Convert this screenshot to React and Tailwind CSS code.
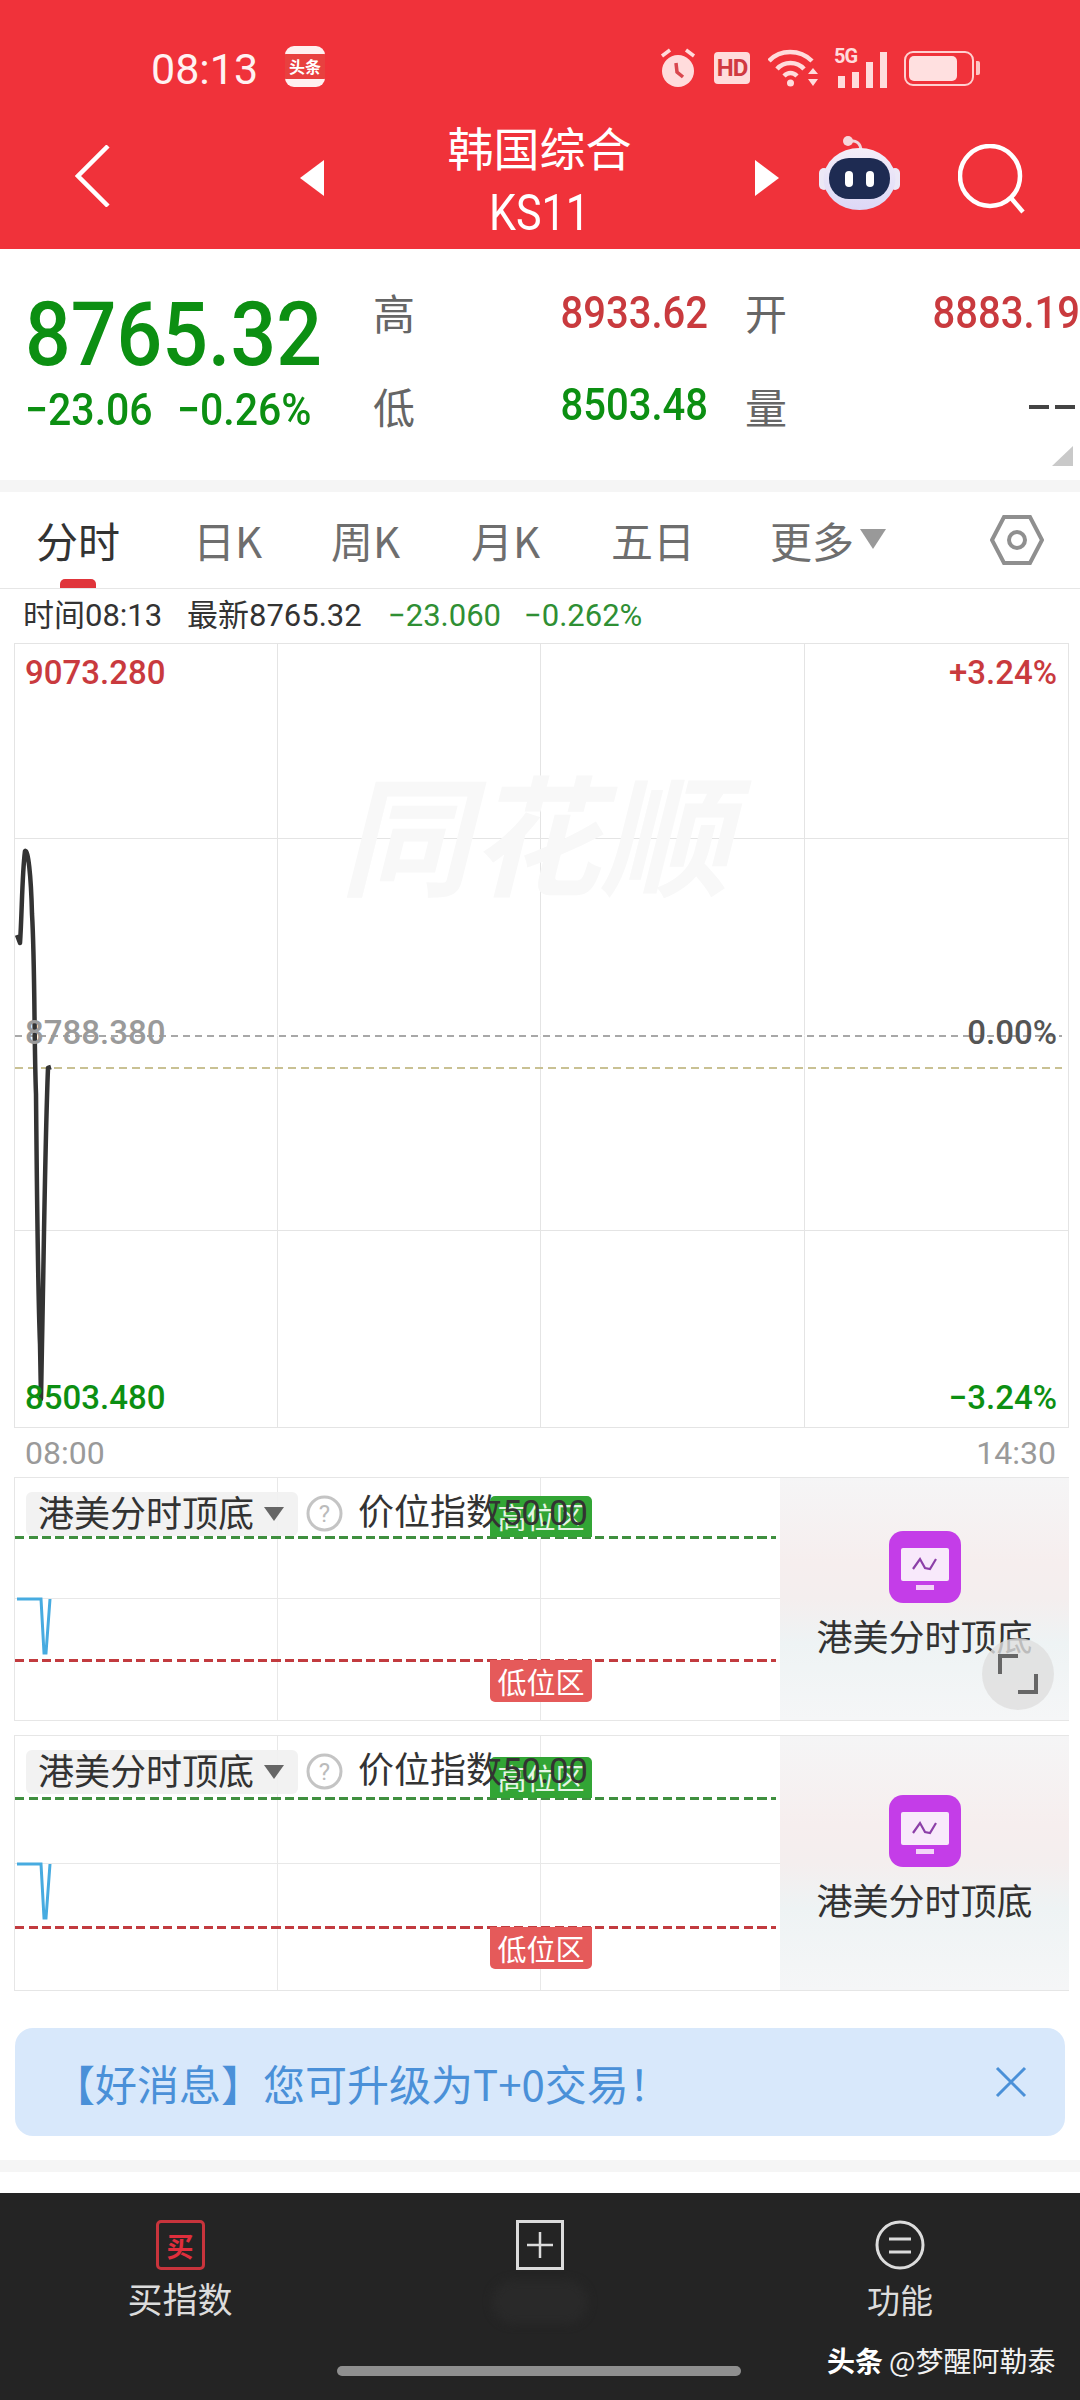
import React from "react";

const cjk = "font-['Noto_Sans_CJK_SC','Noto_Sans',sans-serif]";
const num = "font-['Roboto','Noto_Sans_CJK_SC',sans-serif]";

const tabs = [
  { label: "分时", width: "w-[157px]", active: true },
  { label: "日K", width: "w-[138px]" },
  { label: "周K", width: "w-[140px]" },
  { label: "月K", width: "w-[140px]" },
  { label: "五日", width: "w-[159px]" },
];

function StatusIcons() {
  return (
    <div className="flex items-center ml-[335px] h-[44px]">
      <svg width="36" height="40" viewBox="0 0 36 40" fill="#ffdcdc">
        <circle cx="18" cy="23" r="16" />
        <path d="M2 8 L10 2 M34 8 L26 2" stroke="#ffdcdc" strokeWidth="3.5" />
        <path d="M16 15 L17 24 L23 29" stroke="#d9474e" strokeWidth="3.5" fill="none" />
      </svg>
      <div className="ml-[18px] w-[36px] h-[32px] rounded-[4px] bg-[#ffdcdc] text-[#d03a42] text-[24px] leading-[32px] font-bold text-center font-['Roboto',sans-serif] tracking-[-1px]">
        HD
      </div>
      <svg className="ml-[18px]" width="52" height="40" viewBox="0 0 52 40" fill="none" stroke="#ffdcdc" strokeWidth="4.5">
        <path d="M1 13 C12 1 32 1 44 13" />
        <path d="M9 21 C16 13 29 13 36 21" />
        <path d="M16 28 C20 24 25 24 29 28" />
        <circle cx="22.5" cy="35" r="3.5" fill="#ffdcdc" stroke="none" />
        <path d="M40 26 L45 20 L50 26 Z M40 31 L50 31 L45 38 Z" fill="#ffdcdc" stroke="none" />
      </svg>
      <div className="relative ml-[14px] w-[54px] h-[40px]">
        <span className="absolute left-0 top-[-3px] text-[#ffdcdc] text-[20px] leading-[22px] font-bold font-['Roboto',sans-serif] tracking-[-1px]">
          5G
        </span>
        <div className="absolute inset-0 flex items-end gap-[7px] pl-[4px]">
          <div className="w-[7px] h-[12px] bg-[#ffdcdc]" />
          <div className="w-[7px] h-[16px] bg-[#ffdcdc]" />
          <div className="w-[7px] h-[26px] bg-[#ffdcdc]" />
          <div className="w-[7px] h-[36px] bg-[#ffdcdc]" />
        </div>
      </div>
      <div className="ml-[16px] w-[70px] h-[35px] rounded-[9px] border-2 border-[#ffd0d0] p-[3px]">
        <div className="w-[48px] h-full rounded-[5px] bg-[#ffe0e0]" />
      </div>
      <div className="ml-[2px] w-[4px] h-[14px] rounded-r-[2px] bg-[#ffc4c4]" />
    </div>
  );
}

function Robot() {
  return (
    <svg className="ml-[40px] mt-[-2px]" width="81" height="76" viewBox="0 0 81 76">
      <defs>
        <linearGradient id="shell" x1="0" y1="0" x2="0" y2="1">
          <stop offset="0" stopColor="#f4eef8" />
          <stop offset="1" stopColor="#dcd8f6" />
        </linearGradient>
      </defs>
      <path d="M30 7 C36 4 42 8 42 16" stroke="#f0d6dc" strokeWidth="3" fill="none" />
      <circle cx="29" cy="6" r="5" fill="#f6d8dc" />
      <rect x="0" y="33" width="10" height="22" rx="5" fill="#ece8f6" />
      <rect x="71" y="33" width="10" height="22" rx="5" fill="#ece8f6" />
      <ellipse cx="40.5" cy="44" rx="36" ry="31" fill="url(#shell)" />
      <rect x="10" y="23" width="61" height="41" rx="20" fill="#1e2b52" />
      <rect x="26" y="36" width="8" height="16" rx="4" fill="#fff" />
      <rect x="47" y="36" width="8" height="16" rx="4" fill="#fff" />
    </svg>
  );
}

function Header() {
  return (
    <div className="h-[249px] bg-[#f0323a] text-white shrink-0">
      <div className="h-[120px] pt-[46px] flex items-start">
        <div className="ml-[151px] w-[110px] text-[43px] leading-[46px] text-[#fff2f2] whitespace-nowrap font-['Roboto',sans-serif]">08:13</div>
        <div className="ml-[24px] w-[40px] h-[41px] rounded-[9px] bg-[#fff0f0] flex items-center overflow-hidden">
          <div className={`w-full h-[25px] bg-[#e8403f] text-center text-[16px] leading-[25px] font-bold text-white ${cjk}`}>头条</div>
        </div>
        <StatusIcons />
      </div>
      <div className="flex items-start">
        <svg className="ml-[75px] mt-[25px]" width="35" height="62" viewBox="0 0 35 62" fill="none" stroke="#fff" strokeWidth="4.5">
          <path d="M33 1 L3 31 L33 61" />
        </svg>
        <svg className="ml-[190px] mt-[40px]" width="24" height="36" viewBox="0 0 24 36" fill="#fff">
          <path d="M24 0 L0 18 L24 36 Z" />
        </svg>
        <div className="w-[431px] flex flex-col items-center">
          <div className={`text-[46px] leading-[64px] mt-[-6px] ${cjk}`}>韩国综合</div>
          <div className="text-[43px] leading-[52px] mt-[9px] scale-y-115 font-['Roboto',sans-serif]">KS11</div>
        </div>
        <svg className="mt-[40px]" width="24" height="36" viewBox="0 0 24 36" fill="#fff">
          <path d="M0 0 L24 18 L0 36 Z" />
        </svg>
        <div className="mt-[17px]">
          <Robot />
        </div>
        <svg className="ml-[58px] mt-[24px]" width="68" height="70" viewBox="0 0 68 70" fill="none" stroke="#fff" strokeWidth="4.5">
          <circle cx="32" cy="32" r="30" />
          <path d="M53 54 L65 68" />
        </svg>
      </div>
    </div>
  );
}

function Quote() {
  return (
    <div className="relative h-[231px] flex shrink-0 bg-white">
      <div className="w-[373px] pl-[25px] pt-[41px]">
        <div className={`text-[80.5px] leading-[90px] font-medium text-[#0c8f12] scale-y-110 origin-center whitespace-nowrap ${num}`}>
          8765.32
        </div>
        <div className={`mt-[5px] flex text-[41px] leading-[50px] font-medium text-[#0c8f12] scale-y-110 whitespace-nowrap ${num}`}>
          <span className="w-[152px]">−23.06</span>
          <span>−0.26%</span>
        </div>
      </div>
      <div className="pt-[19px] grid grid-cols-[335px_37px_335px] grid-rows-[92px_92px]">
        <div className="flex items-center justify-between">
          <span className={`text-[42px] mt-[-6px] text-[#666] ${cjk}`}>高</span>
          <span className={`text-[40px] font-medium text-[#c93a3e] scale-y-110 ${num}`}>8933.62</span>
        </div>
        <div />
        <div className="flex items-center justify-between">
          <span className={`text-[42px] mt-[-6px] text-[#666] ${cjk}`}>开</span>
          <span className={`text-[40px] font-medium text-[#c93a3e] scale-y-110 ${num}`}>8883.19</span>
        </div>
        <div className="flex items-center justify-between">
          <span className={`text-[42px] mt-[-2px] text-[#666] ${cjk}`}>低</span>
          <span className={`text-[40px] font-medium text-[#0c8f12] scale-y-110 ${num}`}>8503.48</span>
        </div>
        <div />
        <div className="flex items-center justify-between">
          <span className={`text-[42px] mt-[-2px] text-[#666] ${cjk}`}>量</span>
          <span className="flex gap-[6px] pr-[5px] pt-[2px]">
            <span className="w-[20px] h-[4px] bg-[#444]" />
            <span className="w-[20px] h-[4px] bg-[#444]" />
          </span>
        </div>
      </div>
      <svg className="absolute right-[7px] bottom-[14px]" width="21" height="20" viewBox="0 0 21 20" fill="#c9c9c9">
        <path d="M21 0 L21 20 L0 20 Z" />
      </svg>
    </div>
  );
}

function Tabs() {
  return (
    <div className="h-[97px] pl-[36px] flex items-center border-b border-[#e6e6e6] shrink-0">
      {tabs.map((tab) => (
        <div key={tab.label} className={`relative ${tab.width}`}>
          <span className={`text-[42px] leading-[60px] ${tab.active ? "text-[#333]" : "text-[#6e6e6e]"} ${cjk}`}>{tab.label}</span>
          {tab.active && <div className="absolute left-[24px] top-[69px] w-[36px] h-[9px] rounded-t-[5px] bg-[#e0353b]" />}
        </div>
      ))}
      <div className="flex items-center w-[220px]">
        <span className={`text-[42px] leading-[60px] text-[#6e6e6e] ${cjk}`}>更多</span>
        <svg className="ml-[6px] mt-[-2px]" width="26" height="20" viewBox="0 0 26 20" fill="#999">
          <path d="M0 0 L26 0 L13 20 Z" />
        </svg>
      </div>
      <svg width="54" height="52" viewBox="0 0 54 52" fill="none" stroke="#8f8f8f" strokeWidth="4">
        <path d="M14 3 L40 3 L52 26 L40 49 L14 49 L2 26 Z" />
        <circle cx="27" cy="26" r="8" />
      </svg>
    </div>
  );
}

function InfoRow() {
  return (
    <div className={`h-[54px] pl-[23px] flex items-center text-[31px] text-[#333] whitespace-nowrap shrink-0 ${num}`}>
      <span className="w-[164px]">时间08:13</span>
      <span className="w-[201px]">最新8765.32</span>
      <span className="w-[136px] text-[#2f8f34]">−23.060</span>
      <span className="text-[#2f8f34]">−0.262%</span>
    </div>
  );
}

function MainChart() {
  const cells = Array.from({ length: 16 }, (_, i) => i);
  return (
    <div className={`relative ml-[14px] w-[1055px] h-[785px] border border-[#e4e4e4] grid grid-cols-[263px_263px_264px_1fr] grid-rows-[195px_197px_195px_1fr] shrink-0 font-medium ${num}`}>
      {cells.map((i) => (
        <div
          key={i}
          className={`${i % 4 === 3 ? "" : "border-r"} ${i >= 12 ? "" : "border-b"} ${i >= 4 && i < 8 ? "border-b-transparent" : ""} border-[#e4e4e4]`}
        />
      ))}
      <div className="absolute left-[325px] top-[105px] text-[130px] leading-[160px] font-bold italic text-[#f8f8f8] whitespace-nowrap font-['Noto_Sans_CJK_SC',sans-serif]">
        同花顺
      </div>
      <div className="absolute left-0 right-[6px] top-[391px] h-[2px] bg-[repeating-linear-gradient(90deg,#a8a8a8_0_7px,transparent_7px_12px)]" />
      <div className="absolute left-0 right-[6px] top-[423px] h-[2px] bg-[repeating-linear-gradient(90deg,#c9c193_0_8px,transparent_8px_13px)]" />
      <svg className="absolute left-0 top-0" width="60" height="785" viewBox="0 0 60 785" fill="none" stroke="#333" strokeWidth="4.5" strokeLinejoin="round">
        <path d="M2 291 L5 299 C7 270 7 230 10 207 C13 205 16 230 17 270 C20 320 19 400 21 450 C22 560 23 650 25 700 L26 755 L27 700 C29 600 30 500 33 424 L36 423" />
      </svg>
      <div className="absolute left-[10px] top-[10px] text-[33px] leading-[38px] text-[#c93a3e]">9073.280</div>
      <div className="absolute right-[11px] top-[10px] text-[33px] leading-[38px] text-[#c93a3e]">+3.24%</div>
      <div className="absolute left-[10px] top-[370px] text-[33px] leading-[38px] text-[#9a9a9a]">8788.380</div>
      <div className="absolute right-[11px] top-[370px] text-[33px] leading-[38px] text-[#555]">0.00%</div>
      <div className="absolute left-[10px] top-[735px] text-[33px] leading-[38px] text-[#0c8f12]">8503.480</div>
      <div className="absolute right-[11px] top-[735px] text-[33px] leading-[38px] text-[#0c8f12]">−3.24%</div>
    </div>
  );
}

function Spark({ height }) {
  return (
    <svg className="absolute left-0 top-0" width="60" height="200" viewBox="0 0 60 200" fill="none" stroke="#47abe0" strokeWidth="3">
      <path d={`M2 ${height} L26 ${height} L29 ${height + 54} L31 ${height + 54} L35 ${height}`} />
    </svg>
  );
}

function PanelIcon() {
  return (
    <svg width="72" height="72" viewBox="0 0 72 72">
      <rect width="72" height="72" rx="14" fill="#c43de8" />
      <rect x="12" y="17" width="48" height="33" rx="2" fill="#f8e9fb" />
      <rect x="27" y="54" width="18" height="5" fill="#f3d4f8" />
      <path d="M24 38 L31 28 L36 37 L41 38 L47 28" fill="none" stroke="#8c3fa8" strokeWidth="2.2" />
    </svg>
  );
}

function SubChart({ h, rows, greenTop, redTop, greenBadgeTop, redBadgeTop, sparkTop, iconPad, expand }) {
  return (
    <div className={`relative ml-[14px] w-[1055px] ${h} border-t border-b border-l border-[#e6e6e6] flex shrink-0 ${cjk}`}>
      <div className={`relative w-[765px] grid grid-cols-[263px_263px_239px] ${rows}`}>
        <div className="border-r border-b border-[#e8e8e8]" />
        <div className="border-r border-b border-[#e8e8e8]" />
        <div className="border-b border-[#e8e8e8]" />
        <div className="border-r border-[#e8e8e8]" />
        <div className="border-r border-[#e8e8e8]" />
        <div />
        <div className={`absolute left-0 right-[4px] ${greenTop} h-[3px] bg-[repeating-linear-gradient(90deg,#3f8f3f_0_9px,transparent_9px_13.5px)]`} />
        <div className={`absolute left-0 right-[4px] ${redTop} h-[3px] bg-[repeating-linear-gradient(90deg,#c23b3f_0_9px,transparent_9px_13.5px)]`} />
        <div className={`absolute left-[475px] ${greenBadgeTop} w-[102px] h-[41px] rounded-t-[5px] bg-[#32a535] text-center text-[29px] leading-[41px] text-[#e6f5e6]`}>高位区</div>
        <div className={`absolute left-[475px] ${redBadgeTop} w-[102px] h-[42px] rounded-b-[5px] bg-[#e55a5a] text-center text-[29px] leading-[42px] text-[#fff]`}>低位区</div>
        <Spark height={sparkTop} />
        <div className="absolute left-[11px] top-[9px] flex items-center">
          <div className="w-[272px] h-[44px] rounded-[6px] bg-[#f1f1f1]/90 pl-[12px] flex items-center text-[36px] text-[#333]">
            <span className="w-[226px] mt-[-5px] whitespace-nowrap">港美分时顶底</span>
            <svg width="20" height="14" viewBox="0 0 20 14" fill="#666">
              <path d="M0 0 L20 0 L10 14 Z" />
            </svg>
          </div>
          <svg className="ml-[8px]" width="37" height="37" viewBox="0 0 37 37" fill="none">
            <circle cx="18.5" cy="18.5" r="16.5" stroke="#c4c4c4" strokeWidth="3" />
            <text x="18.5" y="27" textAnchor="middle" fontSize="24" fill="#bbb" fontFamily="Roboto">?</text>
          </svg>
          <span className="ml-[15px] mt-[-5px] text-[36px] text-[#333] whitespace-nowrap">
            价位指数<span className="font-['Roboto'] text-[35px] tracking-[-0.5px]">50.00</span>
          </span>
        </div>
      </div>
      <div className={`relative flex-1 flex flex-col items-center ${iconPad} bg-[linear-gradient(180deg,#f5f5f6_0%,#f6eeee_35%,#f4eeee_50%,#eef3f4_68%,#f5f6f7_100%)]`}>
        <PanelIcon />
        <div className="mt-[7px] text-[36px] leading-[50px] text-[#333] whitespace-nowrap">港美分时顶底</div>
        {expand && (
          <div className="absolute left-[202px] top-[160px] w-[72px] h-[72px] rounded-full bg-[#dedede]/80 flex items-center justify-center">
            <svg width="40" height="40" viewBox="0 0 40 40" fill="none" stroke="#666" strokeWidth="4">
              <path d="M2 20 L2 2 L20 2" />
              <path d="M38 20 L38 38 L20 38" />
            </svg>
          </div>
        )}
      </div>
    </div>
  );
}

function Banner() {
  return (
    <div className={`mt-[37px] mx-[15px] h-[108px] rounded-[18px] bg-[#d8e8fb] flex items-center justify-between pl-[38px] pr-[38px] shrink-0 text-[#4a90d8] ${cjk}`}>
      <span className="text-[42px] whitespace-nowrap">【好消息】您可升级为T+0交易！</span>
      <svg width="32" height="32" viewBox="0 0 32 32" fill="none" stroke="#4a90d8" strokeWidth="3">
        <path d="M2 2 L30 30 M30 2 L2 30" />
      </svg>
    </div>
  );
}

function BottomBar() {
  return (
    <div className={`relative flex-1 bg-[#242424] ${cjk}`}>
      <div className="grid grid-cols-3 pt-[27px] h-[173px]">
        <div className="flex flex-col items-center">
          <div className="w-[49px] h-[50px] rounded-[5px] border-[3px] border-[#c8343c] flex items-center justify-center text-[27px] leading-none font-bold text-[#e02e3c]">买</div>
          <div className="mt-[3px] text-[35px] leading-[50px] text-[#dcdcdc]">买指数</div>
        </div>
        <div className="flex flex-col items-center">
          <svg width="48" height="50" viewBox="0 0 48 50" fill="none" stroke="#dcdcdc">
            <rect x="1.5" y="1.5" width="45" height="47" strokeWidth="3" />
            <path d="M24 12 L24 38 M11 25 L37 25" strokeWidth="2.5" />
          </svg>
          <div className="mt-[10px] w-[96px] h-[44px] rounded-full bg-[#292929] blur-[4px]" />
        </div>
        <div className="flex flex-col items-center">
          <svg width="50" height="50" viewBox="0 0 50 50" fill="none" stroke="#dcdcdc" strokeWidth="3">
            <circle cx="25" cy="25" r="23" />
            <path d="M14 19 L36 19 M14 32 L36 32" />
          </svg>
          <div className="mt-[4px] text-[33px] leading-[50px] text-[#dcdcdc]">功能</div>
        </div>
      </div>
      <div className="ml-[337px] w-[404px] h-[10px] rounded-[5px] bg-[#8f8f8f]" />
      <div className="absolute left-[827px] top-[148px] flex items-center text-[28px] leading-[38px] text-white whitespace-nowrap">
        <span className="font-bold">头条</span>
        <span className="ml-[6px] text-[#f2f2f2]">@梦醒阿勒泰</span>
      </div>
    </div>
  );
}

export default function App() {
  return (
    <div className="w-[1080px] h-[2400px] bg-white flex flex-col overflow-hidden">
      <Header />
      <Quote />
      <div className="h-[12px] bg-[#f5f5f5] shrink-0" />
      <Tabs />
      <InfoRow />
      <MainChart />
      <div className={`h-[49px] pl-[25px] pr-[24px] flex items-center justify-between text-[32px] text-[#9a9a9a] shrink-0 ${num}`}>
        <span>08:00</span>
        <span>14:30</span>
      </div>
      <SubChart
        h="h-[244px]"
        rows="grid-rows-[121px_1fr]"
        greenTop="top-[58px]"
        redTop="top-[181px]"
        greenBadgeTop="top-[18px]"
        redBadgeTop="top-[182px]"
        sparkTop={121}
        iconPad="pt-[53px]"
        expand
      />
      <div className="h-[14px] shrink-0" />
      <SubChart
        h="h-[256px]"
        rows="grid-rows-[128px_1fr]"
        greenTop="top-[61px]"
        redTop="top-[190px]"
        greenBadgeTop="top-[21px]"
        redBadgeTop="top-[191px]"
        sparkTop={128}
        iconPad="pt-[59px]"
      />
      <Banner />
      <div className="mt-[24px] h-[12px] bg-[#f5f5f5] shrink-0" />
      <div className="h-[21px] shrink-0" />
      <BottomBar />
    </div>
  );
}
